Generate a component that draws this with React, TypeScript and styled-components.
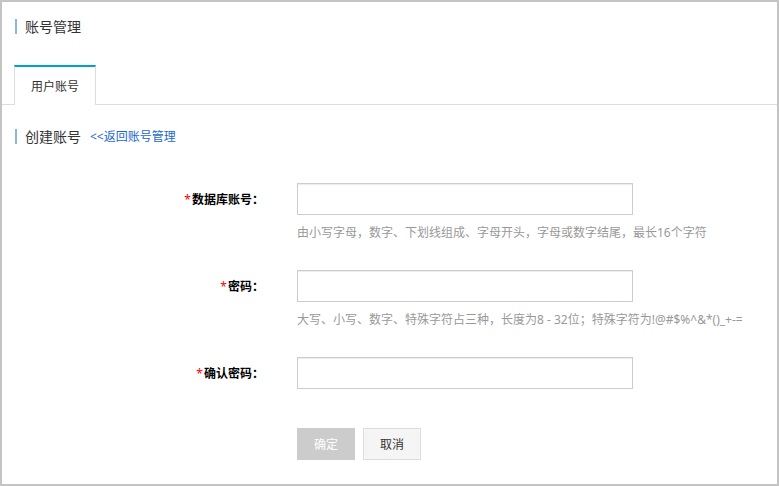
import React from "react";
import styled, { createGlobalStyle } from "styled-components";

const GlobalStyle = createGlobalStyle`
  html, body {
    margin: 0;
    padding: 0;
    background: #fff;
  }
  body {
    font-family: "Noto Sans", "Noto Sans CJK SC", sans-serif;
    font-size: 12px;
    color: #333;
  }
  * {
    box-sizing: border-box;
  }
`;

const Frame = styled.div`
  width: 779px;
  height: 486px;
  border: 2px solid #c4c4c4;
  background: #fff;
  display: flex;
  flex-direction: column;
`;

const Heading = styled.div<{ top: number }>`
  display: flex;
  align-items: center;
  margin: ${props => props.top}px 0 0 13px;
  height: 15px;
`;

const HeadingTitle = styled.span`
  border-left: 2px solid #8cb6dc;
  padding-left: 8px;
  height: 15px;
  line-height: 15px;
  font-size: 14px;
  color: #333;
`;

const BackLink = styled.a`
  margin-left: 9px;
  font-size: 12px;
  line-height: 15px;
  color: #1a68d2;
  text-decoration: none;
  cursor: pointer;
`;

const TabStrip = styled.div`
  display: flex;
  margin-top: 31px;
  padding-left: 12px;
  height: 40px;
  border-bottom: 1px solid #dddddd;
`;

const TabItem = styled.div<{ active?: boolean }>`
  width: 82px;
  height: 40px;
  margin-bottom: -1px;
  border-top: 2px solid ${props => (props.active ? "#00a2ca" : "transparent")};
  border-left: 1px solid #dddddd;
  border-right: 1px solid #dddddd;
  background: #fff;
  display: flex;
  align-items: center;
  justify-content: center;
  font-size: 12px;
  color: #333;
`;

const Form = styled.div`
  margin-top: 39px;
  display: flex;
  flex-direction: column;
`;

const FieldRow = styled.div<{ gap: number }>`
  display: grid;
  grid-template-columns: 262px 336px;
  column-gap: 33px;
  margin-bottom: ${props => props.gap}px;
`;

const Label = styled.label`
  height: 32px;
  display: flex;
  align-items: center;
  justify-content: flex-end;
  font-size: 12px;
  font-weight: bold;
  color: #000;
`;

const Star = styled.span`
  color: #f00;
  font-weight: normal;
  margin-right: 1px;
`;

const TextInput = styled.input`
  width: 336px;
  height: 32px;
  border: 1px solid #cccccc;
  box-shadow: inset 0 1px 1px rgba(0, 0, 0, 0.075);
  padding: 0 8px;
  font-size: 12px;
  outline: none;
`;

const Hint = styled.div`
  grid-column: 2;
  margin-top: 9px;
  line-height: 18px;
  font-size: 12px;
  color: #999;
  white-space: nowrap;
`;

const ButtonBar = styled.div`
  display: flex;
  gap: 8px;
  padding-left: 295px;
`;

const Button = styled.button<{ primary?: boolean }>`
  width: 58px;
  height: 32px;
  font-family: inherit;
  font-size: 12px;
  cursor: pointer;
  border: 1px solid ${props => (props.primary ? "#cccccc" : "#dddddd")};
  background: ${props => (props.primary ? "#cccccc" : "#f5f5f5")};
  color: ${props => (props.primary ? "#fff" : "#333")};
`;

interface FieldProps {
  label: string;
  hint?: string;
  type?: string;
  gap: number;
}

const Field = ({ label, hint, type = "text", gap }: FieldProps) => {
  return (
    <FieldRow gap={gap}>
      <Label>
        <Star>*</Star>
        {label}：
      </Label>
      <TextInput type={type} />
      {hint && <Hint>{hint}</Hint>}
    </FieldRow>
  );
};

const App = () => {
  return (
    <>
      <GlobalStyle />
      <Frame>
        <Heading top={17}>
          <HeadingTitle>账号管理</HeadingTitle>
        </Heading>

        <TabStrip>
          <TabItem active>用户账号</TabItem>
        </TabStrip>

        <Heading top={24}>
          <HeadingTitle>创建账号</HeadingTitle>
          <BackLink>&lt;&lt;返回账号管理</BackLink>
        </Heading>

        <Form>
          <Field
            label="数据库账号"
            hint="由小写字母，数字、下划线组成、字母开头，字母或数字结尾，最长16个字符"
            gap={28}
          />
          <Field
            label="密码"
            type="password"
            hint="大写、小写、数字、特殊字符占三种，长度为8 - 32位；特殊字符为!@#$%^&*()_+-="
            gap={28}
          />
          <Field label="确认密码" type="password" gap={39} />
          <ButtonBar>
            <Button primary>确定</Button>
            <Button>取消</Button>
          </ButtonBar>
        </Form>
      </Frame>
    </>
  );
};

export default App;
